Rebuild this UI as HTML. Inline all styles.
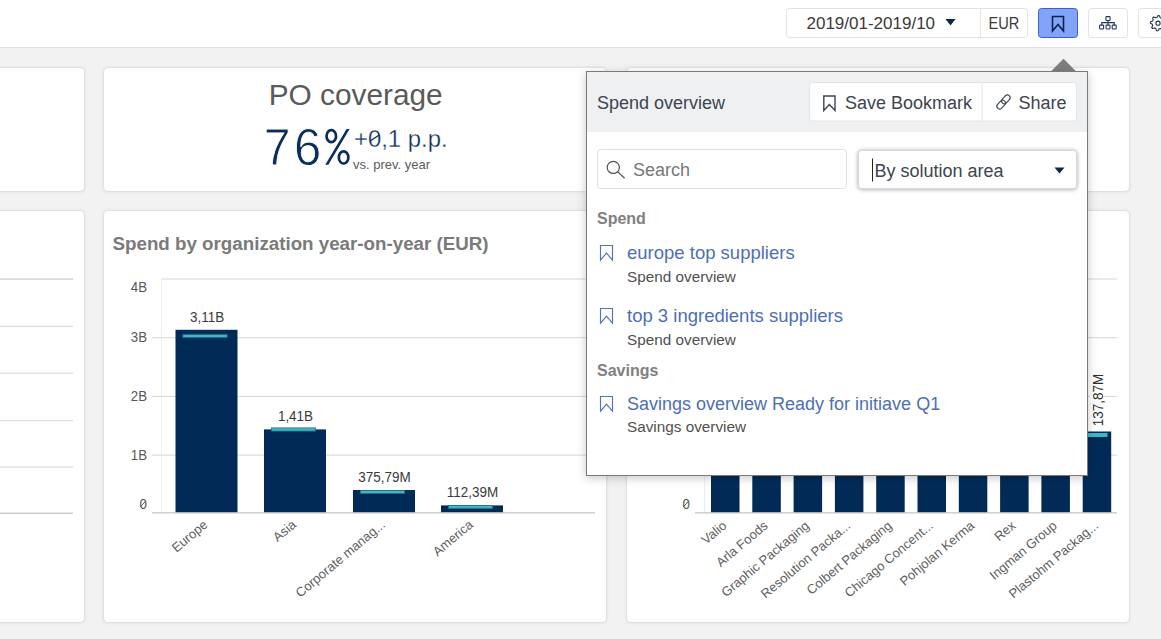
<!DOCTYPE html>
<html><head><meta charset="utf-8"><title>Spend overview</title>
<style>html,body{margin:0;padding:0;width:1161px;height:639px;overflow:hidden;background:#f2f2f2;font-family:"Liberation Sans", sans-serif;}svg{display:block}</style>
</head><body>
<svg width="1161" height="639" viewBox="0 0 1161 639"><rect x="0" y="0" width="1161" height="639" fill="#f2f2f2"/>
<rect x="0" y="0" width="1161" height="47" fill="#ffffff"/>
<rect x="0" y="47" width="1161" height="1" fill="#e3e3e3"/>
<defs><filter id="cs" x="-5%" y="-5%" width="110%" height="110%"><feGaussianBlur stdDeviation="1.2"/></filter></defs>
<rect x="-420.5" y="66.7" width="506" height="126" rx="5" fill="rgba(0,0,0,0.05)" filter="url(#cs)"/>
<rect x="-419.5" y="67.5" width="504" height="124" rx="4.5" fill="#ffffff" stroke="#e0e0e0" stroke-width="1"/>
<rect x="102.5" y="66.7" width="505" height="126" rx="5" fill="rgba(0,0,0,0.05)" filter="url(#cs)"/>
<rect x="103.5" y="67.5" width="503" height="124" rx="4.5" fill="#ffffff" stroke="#e0e0e0" stroke-width="1"/>
<rect x="625.5" y="66.7" width="505" height="126" rx="5" fill="rgba(0,0,0,0.05)" filter="url(#cs)"/>
<rect x="626.5" y="67.5" width="503" height="124" rx="4.5" fill="#ffffff" stroke="#e0e0e0" stroke-width="1"/>
<rect x="-420.5" y="209.7" width="506" height="414" rx="5" fill="rgba(0,0,0,0.05)" filter="url(#cs)"/>
<rect x="-419.5" y="210.5" width="504" height="412" rx="4.5" fill="#ffffff" stroke="#e0e0e0" stroke-width="1"/>
<rect x="102.5" y="209.7" width="505" height="414" rx="5" fill="rgba(0,0,0,0.05)" filter="url(#cs)"/>
<rect x="103.5" y="210.5" width="503" height="412" rx="4.5" fill="#ffffff" stroke="#e0e0e0" stroke-width="1"/>
<rect x="625.5" y="209.7" width="505" height="414" rx="5" fill="rgba(0,0,0,0.05)" filter="url(#cs)"/>
<rect x="626.5" y="210.5" width="503" height="412" rx="4.5" fill="#ffffff" stroke="#e0e0e0" stroke-width="1"/>
<rect x="786.5" y="8.5" width="241" height="29" rx="3" fill="#fff" stroke="#e2e2e2"/>
<rect x="980" y="9" width="1" height="28" fill="#e6e6e6"/>
<text x="806.5" y="28.8" font-size="17" fill="#3a3a3a" font-weight="normal" text-anchor="start" font-family='"Liberation Sans", sans-serif' >2019/01-2019/10</text>
<polygon points="945.5,19 955.5,19 950.5,25.5" fill="#0d2748"/>
<text x="988.306" y="28.9" font-size="17" fill="#3a3a3a" font-weight="normal" text-anchor="start" font-family='"Liberation Sans", sans-serif' transform="translate(989.7 0) scale(0.86 1) translate(-989.7 0)">EUR</text>
<rect x="1038.5" y="8.5" width="39" height="29" rx="3" fill="#82a4f8" stroke="#3a62c6"/>
<path d="M1052.5 16.5 H1063.5 V31 L1058 24.5 L1052.5 31 Z" fill="none" stroke="#0b2350" stroke-width="1.6" stroke-linejoin="miter"/>
<rect x="1088.5" y="8.5" width="39" height="29" rx="3" fill="#fff" stroke="#e2e2e2"/>
<g fill="none" stroke="#1e3552" stroke-width="1.05"><rect x="1105.9" y="16.6" width="4.2" height="3.9" rx="0.8"/><path d="M1108 20.5 V25 M1101.8 25 V22.6 H1114.2 V25"/><rect x="1099.6" y="25.1" width="4" height="3.8" rx="0.7"/><rect x="1106" y="25.1" width="4" height="3.8" rx="0.7"/><rect x="1112.2" y="25.1" width="4" height="3.8" rx="0.7"/></g>
<rect x="1138.5" y="8.5" width="39" height="29" rx="3" fill="#fff" stroke="#e2e2e2"/>
<polygon points="1165.60,23.20 1165.45,24.68 1163.36,25.42 1162.82,26.42 1163.37,28.57 1162.22,29.52 1160.22,28.56 1159.13,28.89 1158.00,30.80 1156.52,30.65 1155.78,28.56 1154.78,28.02 1152.63,28.57 1151.68,27.42 1152.64,25.42 1152.31,24.33 1150.40,23.20 1150.55,21.72 1152.64,20.98 1153.18,19.98 1152.63,17.83 1153.78,16.88 1155.78,17.84 1156.87,17.51 1158.00,15.60 1159.48,15.75 1160.22,17.84 1161.22,18.38 1163.37,17.83 1164.32,18.98 1163.36,20.98 1163.69,22.07" fill="none" stroke="#1e3552" stroke-width="1.1" stroke-linejoin="round"/>
<circle cx="1158" cy="23.2" r="2.1" fill="none" stroke="#1e3552" stroke-width="1.1"/>
<text x="355.7" y="104.5" font-size="29.8" fill="#5a5a5a" font-weight="normal" text-anchor="middle" font-family='"Liberation Sans", sans-serif' >PO coverage</text>
<g transform="translate(263.75,164.6) scale(0.935,1)">
<text x="0" y="0" font-size="51.5" fill="#0b2d5a" font-weight="normal" text-anchor="start" font-family='"Liberation Sans", sans-serif' stroke="#ffffff" stroke-width="0.8">7</text>
</g>
<g transform="translate(294.00,164.6) scale(0.952,1)">
<text x="0" y="0" font-size="51.5" fill="#0b2d5a" font-weight="normal" text-anchor="start" font-family='"Liberation Sans", sans-serif' stroke="#ffffff" stroke-width="0.8">6</text>
</g>
<ellipse cx="331.3" cy="136.15" rx="4.75" ry="6" fill="none" stroke="#0b2d5a" stroke-width="2.7"/>
<ellipse cx="343.6" cy="157.4" rx="4.75" ry="6.1" fill="none" stroke="#0b2d5a" stroke-width="2.7"/>
<polygon points="325.3,164.8 328.3,164.8 349.6,128.9 346.6,128.9" fill="#0b2d5a"/>
<g transform="translate(354.0,146.6) scale(0.975,1)">
<text x="0" y="0" font-size="24.5" fill="#0b2d5a" font-weight="normal" text-anchor="start" font-family='"Liberation Sans", sans-serif' stroke="#ffffff" stroke-width="0.3">+0,1 p.p.</text>
</g>
<text x="353" y="168.8" font-size="13" fill="#5b5b5b" font-weight="normal" text-anchor="start" font-family='"Liberation Sans", sans-serif' >vs. prev. year</text>
<text x="112.5" y="249.8" font-size="18.75" fill="#7a7a7a" font-weight="bold" text-anchor="start" font-family='"Liberation Sans", sans-serif' >Spend by organization year-on-year (EUR)</text>
<rect x="162" y="278.5" width="433" height="1" fill="#d6d6d6"/>
<rect x="152" y="337.2" width="443" height="1" fill="#d6d6d6"/>
<rect x="152" y="395.9" width="443" height="1" fill="#d6d6d6"/>
<rect x="152" y="454.6" width="443" height="1" fill="#d6d6d6"/>
<rect x="161" y="279" width="1" height="234" fill="#ededed"/>
<rect x="152" y="512.2" width="443" height="1.3" fill="#c8c8c8"/>
<g transform="translate(147.00,292.00) scale(0.885,1)">
<text x="0" y="0" font-size="15" fill="#585858" font-weight="normal" text-anchor="end" font-family='"Liberation Sans", sans-serif' >4B</text>
</g>
<g transform="translate(147.00,341.80) scale(0.885,1)">
<text x="0" y="0" font-size="15" fill="#585858" font-weight="normal" text-anchor="end" font-family='"Liberation Sans", sans-serif' >3B</text>
</g>
<g transform="translate(147.00,400.90) scale(0.885,1)">
<text x="0" y="0" font-size="15" fill="#585858" font-weight="normal" text-anchor="end" font-family='"Liberation Sans", sans-serif' >2B</text>
</g>
<g transform="translate(147.00,459.60) scale(0.885,1)">
<text x="0" y="0" font-size="15" fill="#585858" font-weight="normal" text-anchor="end" font-family='"Liberation Sans", sans-serif' >1B</text>
</g>
<g transform="translate(147.00,508.80) scale(0.885,1)">
<text x="0" y="0" font-size="15" fill="#585858" font-weight="normal" text-anchor="end" font-family='"Liberation Sans", sans-serif' >0</text>
</g>
<rect x="175.5" y="329.8" width="62" height="182.4" fill="#022a57"/>
<rect x="182.9" y="334.4" width="44.2" height="3.2" fill="#41b6c6" stroke="#1d6f84" stroke-width="0.8"/>
<g transform="translate(207.00,321.55) scale(0.93,1)">
<text x="0" y="0" font-size="14.5" fill="#3a3a3a" font-weight="normal" text-anchor="middle" font-family='"Liberation Sans", sans-serif' >3,11B</text>
</g>
<text x="208.5" y="526" font-size="13" fill="#606060" text-anchor="end" font-family='"Liberation Sans", sans-serif' transform="rotate(-40 208.5 526)">Europe</text>
<rect x="264" y="429.4" width="62" height="82.8" fill="#022a57"/>
<rect x="271.4" y="427.9" width="44.2" height="3.2" fill="#41b6c6" stroke="#1d6f84" stroke-width="0.8"/>
<g transform="translate(295.50,421.17) scale(0.93,1)">
<text x="0" y="0" font-size="14.5" fill="#3a3a3a" font-weight="normal" text-anchor="middle" font-family='"Liberation Sans", sans-serif' >1,41B</text>
</g>
<text x="297" y="526" font-size="13" fill="#606060" text-anchor="end" font-family='"Liberation Sans", sans-serif' transform="rotate(-40 297 526)">Asia</text>
<rect x="353" y="490.0" width="62" height="22.2" fill="#022a57"/>
<rect x="360.4" y="490.4" width="44.2" height="3.2" fill="#41b6c6" stroke="#1d6f84" stroke-width="0.8"/>
<g transform="translate(384.50,481.78) scale(0.93,1)">
<text x="0" y="0" font-size="14.5" fill="#3a3a3a" font-weight="normal" text-anchor="middle" font-family='"Liberation Sans", sans-serif' >375,79M</text>
</g>
<text x="386" y="526" font-size="13" fill="#606060" text-anchor="end" font-family='"Liberation Sans", sans-serif' transform="rotate(-40 386 526)">Corporate manag...</text>
<rect x="441" y="505.4" width="62" height="6.8" fill="#022a57"/>
<rect x="448.4" y="505.4" width="44.2" height="3.2" fill="#41b6c6" stroke="#1d6f84" stroke-width="0.8"/>
<g transform="translate(472.50,497.21) scale(0.93,1)">
<text x="0" y="0" font-size="14.5" fill="#3a3a3a" font-weight="normal" text-anchor="middle" font-family='"Liberation Sans", sans-serif' >112,39M</text>
</g>
<text x="474" y="526" font-size="13" fill="#606060" text-anchor="end" font-family='"Liberation Sans", sans-serif' transform="rotate(-40 474 526)">America</text>
<rect x="0" y="278.4" width="73" height="1.3" fill="#cdcdcd"/>
<rect x="0" y="325.7" width="73" height="1.3" fill="#dedede"/>
<rect x="0" y="372.6" width="73" height="1.3" fill="#dedede"/>
<rect x="0" y="419.9" width="73" height="1.3" fill="#dedede"/>
<rect x="0" y="466.4" width="73" height="1.3" fill="#dedede"/>
<rect x="0" y="512.6" width="73" height="1.3" fill="#c8c8c8"/>
<rect x="695" y="278.5" width="422" height="1" fill="#d6d6d6"/>
<rect x="695" y="337.2" width="422" height="1" fill="#d6d6d6"/>
<rect x="695" y="395.9" width="422" height="1" fill="#d6d6d6"/>
<rect x="695" y="454.6" width="422" height="1" fill="#d6d6d6"/>
<rect x="704" y="279" width="1" height="234" fill="#ededed"/>
<rect x="695" y="512.2" width="422" height="1.3" fill="#c8c8c8"/>
<g transform="translate(690.00,508.80) scale(0.885,1)">
<text x="0" y="0" font-size="15" fill="#585858" font-weight="normal" text-anchor="end" font-family='"Liberation Sans", sans-serif' >0</text>
</g>
<rect x="711.0" y="300" width="28.5" height="212.2" fill="#022a57"/>
<text x="727.5" y="527" font-size="13" fill="#606060" text-anchor="end" font-family='"Liberation Sans", sans-serif' transform="rotate(-40 727.5 527)">Valio</text>
<rect x="752.3" y="300" width="28.5" height="212.2" fill="#022a57"/>
<text x="768.8" y="527" font-size="13" fill="#606060" text-anchor="end" font-family='"Liberation Sans", sans-serif' transform="rotate(-40 768.8 527)">Arla Foods</text>
<rect x="793.6" y="300" width="28.5" height="212.2" fill="#022a57"/>
<text x="810.1" y="527" font-size="13" fill="#606060" text-anchor="end" font-family='"Liberation Sans", sans-serif' transform="rotate(-40 810.1 527)">Graphic Packaging</text>
<rect x="834.9" y="300" width="28.5" height="212.2" fill="#022a57"/>
<text x="851.4" y="527" font-size="13" fill="#606060" text-anchor="end" font-family='"Liberation Sans", sans-serif' transform="rotate(-40 851.4 527)">Resolution Packa...</text>
<rect x="876.2" y="300" width="28.5" height="212.2" fill="#022a57"/>
<text x="892.7" y="527" font-size="13" fill="#606060" text-anchor="end" font-family='"Liberation Sans", sans-serif' transform="rotate(-40 892.7 527)">Colbert Packaging</text>
<rect x="917.5" y="300" width="28.5" height="212.2" fill="#022a57"/>
<text x="934.0" y="527" font-size="13" fill="#606060" text-anchor="end" font-family='"Liberation Sans", sans-serif' transform="rotate(-40 934.0 527)">Chicago Concent...</text>
<rect x="958.8" y="300" width="28.5" height="212.2" fill="#022a57"/>
<text x="975.3" y="527" font-size="13" fill="#606060" text-anchor="end" font-family='"Liberation Sans", sans-serif' transform="rotate(-40 975.3 527)">Pohjolan Kerma</text>
<rect x="1000.1" y="300" width="28.5" height="212.2" fill="#022a57"/>
<text x="1016.6" y="527" font-size="13" fill="#606060" text-anchor="end" font-family='"Liberation Sans", sans-serif' transform="rotate(-40 1016.6 527)">Rex</text>
<rect x="1041.4" y="300" width="28.5" height="212.2" fill="#022a57"/>
<text x="1057.9" y="527" font-size="13" fill="#606060" text-anchor="end" font-family='"Liberation Sans", sans-serif' transform="rotate(-40 1057.9 527)">Ingman Group</text>
<rect x="1082.7" y="431.5" width="28.5" height="80.7" fill="#022a57"/>
<text x="1099.2" y="527" font-size="13" fill="#606060" text-anchor="end" font-family='"Liberation Sans", sans-serif' transform="rotate(-40 1099.2 527)">Plastohm Packag...</text>
<rect x="1088" y="433" width="19.5" height="4" fill="#41b6c6"/>
<rect x="1090" y="371" width="14" height="56" fill="#ffffff"/>
<g transform="translate(1102.7,426.2) rotate(-90) scale(0.9,1)"><text x="0" y="0" font-size="15" fill="#2e2e2e" font-family='"Liberation Sans", sans-serif'>137,87M</text></g>
<polygon points="1050.8,71.5 1063.5,58.8 1076.2,71.5" fill="#7d7d7d"/>
<defs><filter id="sh" x="-10%" y="-10%" width="120%" height="125%"><feGaussianBlur stdDeviation="5"/></filter><filter id="sh2" x="-10%" y="-30%" width="120%" height="160%"><feGaussianBlur stdDeviation="2"/></filter></defs>
<rect x="586" y="74" width="502" height="404" fill="rgba(0,0,0,0.22)" filter="url(#sh)"/>
<rect x="586.5" y="71.5" width="501" height="404" fill="#ffffff" stroke="#7a7a7a"/>
<rect x="587" y="72" width="500" height="60" fill="#eff0f2"/>
<text x="597" y="109" font-size="18" fill="#3d4450" font-weight="normal" text-anchor="start" font-family='"Liberation Sans", sans-serif' >Spend overview</text>
<rect x="809.5" y="82.5" width="267" height="38.5" rx="3" fill="#fff" stroke="#e3e5e8"/>
<rect x="981.5" y="83" width="1" height="38" fill="#e3e5e8"/>
<path d="M823.8 96 H835 V110.5 L829.4 104.5 L823.8 110.5 Z" fill="none" stroke="#3d4450" stroke-width="1.4"/>
<text x="845" y="109" font-size="18" fill="#3d4450" font-weight="normal" text-anchor="start" font-family='"Liberation Sans", sans-serif' >Save Bookmark</text>
<g fill="none" stroke="#3d4450" stroke-width="1.15" transform="rotate(-48 1003.5 102)"><rect x="995" y="99.25" width="10" height="5.5" rx="2.75"/><rect x="1002" y="99.25" width="10" height="5.5" rx="2.75"/></g>
<text x="1018.5" y="109" font-size="18" fill="#3d4450" font-weight="normal" text-anchor="start" font-family='"Liberation Sans", sans-serif' >Share</text>
<rect x="597.5" y="149.5" width="249" height="39" rx="3" fill="#fff" stroke="#dcdfe3"/>
<circle cx="613.3" cy="167.4" r="6.1" fill="none" stroke="#555" stroke-width="1.25"/>
<path d="M617.8 171.9 L624.6 178.3" stroke="#555" stroke-width="1.3"/>
<text x="633" y="176" font-size="18" fill="#777777" font-weight="normal" text-anchor="start" font-family='"Liberation Sans", sans-serif' >Search</text>
<rect x="858" y="150.5" width="219" height="39" rx="4" fill="rgba(0,0,0,0.35)" filter="url(#sh2)"/>
<rect x="858.5" y="150.5" width="218" height="38" rx="3" fill="#fff" stroke="#d5d8dc"/>
<rect x="872" y="158.5" width="1" height="23" fill="#222"/>
<text x="874.5" y="176.6" font-size="18" fill="#3d4450" font-weight="normal" text-anchor="start" font-family='"Liberation Sans", sans-serif' >By solution area</text>
<polygon points="1054.5,167.5 1064.5,167.5 1059.5,173.5" fill="#0d2748"/>
<text x="597" y="224.4" font-size="16" fill="#808080" font-weight="bold" text-anchor="start" font-family='"Liberation Sans", sans-serif' >Spend</text>
<path d="M600.5 245.5 H612.5 V260.1 L606.5 253.1 L600.5 260.1 Z" fill="none" stroke="#5573b6" stroke-width="1.15" stroke-linejoin="miter"/>
<text x="627" y="258.6" font-size="18.5" fill="#4d6fb3" font-weight="normal" text-anchor="start" font-family='"Liberation Sans", sans-serif' >europe top suppliers</text>
<text x="627" y="282" font-size="15.3" fill="#505050" font-weight="normal" text-anchor="start" font-family='"Liberation Sans", sans-serif' >Spend overview</text>
<path d="M600.5 308.5 H612.5 V323.1 L606.5 316.1 L600.5 323.1 Z" fill="none" stroke="#5573b6" stroke-width="1.15" stroke-linejoin="miter"/>
<text x="627" y="322.3" font-size="18.5" fill="#4d6fb3" font-weight="normal" text-anchor="start" font-family='"Liberation Sans", sans-serif' >top 3 ingredients suppliers</text>
<text x="627" y="344.6" font-size="15.3" fill="#505050" font-weight="normal" text-anchor="start" font-family='"Liberation Sans", sans-serif' >Spend overview</text>
<text x="597" y="376.2" font-size="16" fill="#808080" font-weight="bold" text-anchor="start" font-family='"Liberation Sans", sans-serif' >Savings</text>
<path d="M600.5 396.5 H612.5 V411.1 L606.5 404.1 L600.5 411.1 Z" fill="none" stroke="#5573b6" stroke-width="1.15" stroke-linejoin="miter"/>
<text x="627" y="410.3" font-size="18" fill="#4d6fb3" font-weight="normal" text-anchor="start" font-family='"Liberation Sans", sans-serif' >Savings overview Ready for initiave Q1</text>
<text x="627" y="432.4" font-size="15.3" fill="#505050" font-weight="normal" text-anchor="start" font-family='"Liberation Sans", sans-serif' >Savings overview</text>
<path d="M140.2 507 L145.8 501" stroke="#585858" stroke-width="1"/>
<path d="M683.2 507 L688.8 501" stroke="#585858" stroke-width="1"/>
<path d="M369.8 141.3 L379.6 134.7" stroke="#0b2d5a" stroke-width="1.3"/></svg>
</body></html>
